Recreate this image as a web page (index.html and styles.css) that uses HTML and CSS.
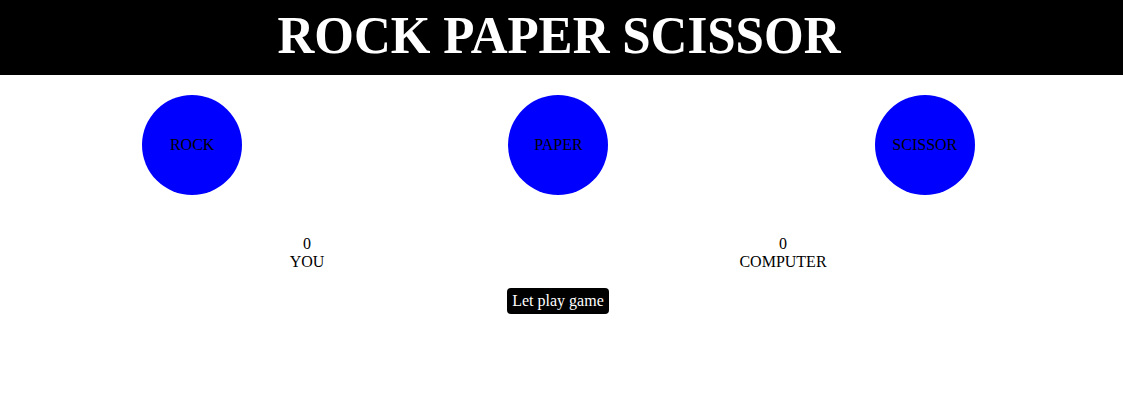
FILE: index.html
```html
<!DOCTYPE html>
<html>
<head>
<meta charset="utf-8">
<title>Rock Paper Scissor</title>
<link rel="stylesheet" href="styles.css">
</head>
<body>
<header class="header"><h1 class="title">ROCK PAPER SCISSOR</h1></header>
<div class="choices">
  <div class="choice">ROCK</div>
  <div class="choice">PAPER</div>
  <div class="choice">SCISSOR</div>
</div>
<div class="scores">
  <div class="score"><div>0</div><div>YOU</div></div>
  <div class="score"><div>0</div><div>COMPUTER</div></div>
</div>
<div class="msg-row"><div class="msg">Let play game</div></div>
</body>
</html>
```
FILE: styles.css
```css
html, body {
  margin: 0;
  padding: 0;
  background: #fff;
  font-family: "Liberation Serif", "Times New Roman", serif;
  font-size: 16px;
  color: #000;
}
.header {
  background: #000;
  height: 75px;
  display: flex;
  align-items: center;
  justify-content: center;
  padding-right: 5px;
}
.title {
  margin: 0;
  color: #fff;
  font-size: 51px;
  font-weight: bold;
  line-height: 1;
  padding-bottom: 4px;
  transform: scaleY(1.04);
}
.choices {
  display: flex;
  justify-content: space-around;
  padding: 20px 15px 0 9px;
}
.choice {
  width: 100px;
  height: 100px;
  border-radius: 50%;
  background: #0000ff;
  display: flex;
  align-items: center;
  justify-content: center;
  line-height: 18px;
}
.scores {
  display: grid;
  grid-template-columns: 476px 476px;
  padding-left: 69px;
  margin-top: 40px;
  line-height: 18px;
}
.score {
  text-align: center;
}
.msg-row {
  display: flex;
  justify-content: center;
  padding-right: 7px;
  margin-top: 17px;
}
.msg {
  background: #000;
  color: #fff;
  border-radius: 4px;
  padding: 4px 5px;
  line-height: 18px;
}
```
